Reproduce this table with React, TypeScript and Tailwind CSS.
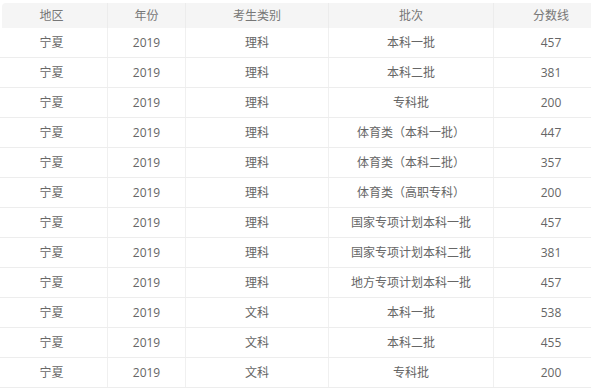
import React from "react";

const rows: [string, string, string, string, string][] = [
  ["宁夏", "2019", "理科", "本科一批", "457"],
  ["宁夏", "2019", "理科", "本科二批", "381"],
  ["宁夏", "2019", "理科", "专科批", "200"],
  ["宁夏", "2019", "理科", "体育类（本科一批）", "447"],
  ["宁夏", "2019", "理科", "体育类（本科二批）", "357"],
  ["宁夏", "2019", "理科", "体育类（高职专科）", "200"],
  ["宁夏", "2019", "理科", "国家专项计划本科一批", "457"],
  ["宁夏", "2019", "理科", "国家专项计划本科二批", "381"],
  ["宁夏", "2019", "理科", "地方专项计划本科一批", "457"],
  ["宁夏", "2019", "文科", "本科一批", "538"],
  ["宁夏", "2019", "文科", "本科二批", "455"],
  ["宁夏", "2019", "文科", "专科批", "200"],
];

const cols = "grid grid-cols-[106px_78px_143px_165px_114px]";

export default function App() {
  return (
    <div
      className="w-[591px] h-[388px] overflow-hidden bg-white"
      style={{ fontFamily: '"Open Sans", "Noto Sans CJK SC", sans-serif' }}
    >
      <div className="ml-[2px] w-[606px] pt-[3px]">
        <div className={`${cols} h-[25px] bg-[#f5f5f5] rounded-tl-[4px] text-[12px] text-[#777]`}>
          {["地区", "年份", "考生类别", "批次", "分数线"].map((h, i) => (
            <div
              key={h}
              className={`flex items-center justify-center ${i === 0 ? "pr-[6px]" : ""} ${i < 4 ? "border-r border-[#ececec]" : ""}`}
            >
              {h}
            </div>
          ))}
        </div>
        {rows.map((r, ri) => (
          <div
            key={ri}
            className={`${cols} h-[30px] border-b border-[#ededed] text-[12px] text-[#666] -ml-[2px] pl-[2px]`}
          >
            {r.map((c, i) => (
              <div
                key={i}
                className={`flex items-center justify-center ${i === 0 ? "pr-[6px]" : ""} ${i < 4 ? "border-r border-[#f0f0f0]" : ""}`}
              >
                {c}
              </div>
            ))}
          </div>
        ))}
      </div>
    </div>
  );
}
